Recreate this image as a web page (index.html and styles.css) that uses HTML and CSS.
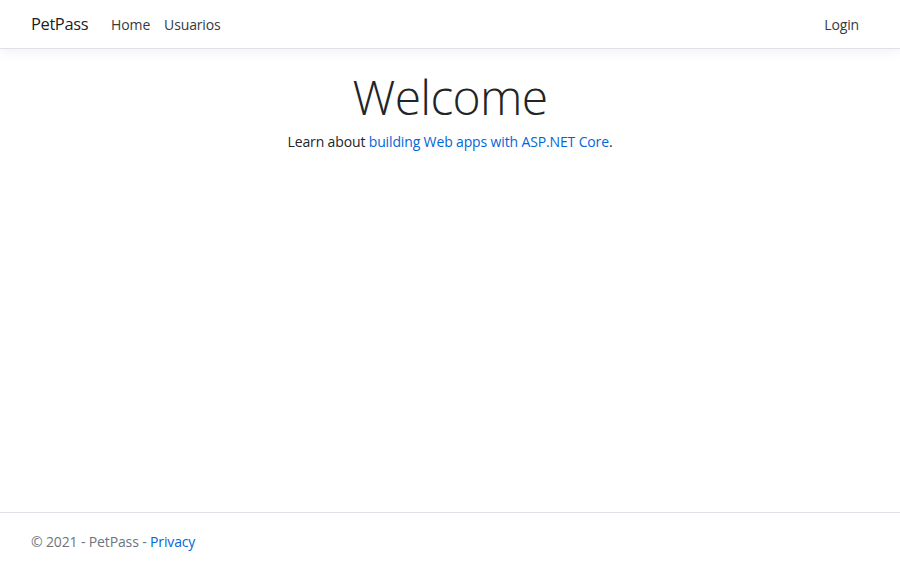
FILE: index.html
```html
<!DOCTYPE html>
<html lang="en">
<head>
<meta charset="utf-8">
<title>Home Page - PetPass</title>
<link rel="stylesheet" href="styles.css">
</head>
<body>
<div class="page">
  <header class="navbar">
    <a class="brand" href="#">PetPass</a>
    <nav class="nav-left">
      <a class="nav-link" href="#">Home</a>
      <a class="nav-link" href="#">Usuarios</a>
    </nav>
    <nav class="nav-right">
      <a class="nav-link" href="#">Login</a>
    </nav>
  </header>
  <main class="main">
    <h1 class="display">Welcome</h1>
    <p class="lead-text">Learn about <a class="link" href="#">building Web apps with ASP.NET Core</a>.</p>
  </main>
  <footer class="footer">
    &copy; 2021 - PetPass - <a class="link" href="#">Privacy</a>
  </footer>
</div>
</body>
</html>
```
FILE: styles.css
```css
html, body {
  margin: 0;
  padding: 0;
}
body {
  font-family: "Open Sans", "Noto Sans", sans-serif;
  font-size: 14px;
  letter-spacing: -0.14px;
  line-height: 1.5;
  color: #212529;
  background: #fff;
}
a { text-decoration: none; }
.page {
  min-height: 100vh;
  display: flex;
  flex-direction: column;
}
.navbar {
  display: flex;
  align-items: center;
  height: 48px;
  padding: 0 31px;
  border-bottom: 1px solid #dee2e6;
  box-shadow: 0 3.5px 10.5px rgba(0,0,0,.05);
}
.brand {
  font-size: 16.5px;
  letter-spacing: -0.4px;
  color: rgba(0,0,0,.9);
  margin-right: 16px;
}
.nav-left, .nav-right {
  display: flex;
}
.nav-left { flex: 1; }
.nav-link {
  color: #343a40;
  padding: 0 7px;
}
.nav-right .nav-link { padding-right: 10px; }
.main {
  flex: 1;
  text-align: center;
  padding-top: 19px;
}
.display {
  font-size: 48px;
  font-weight: 300;
  letter-spacing: -0.7px;
  line-height: 1.2;
  margin: 0 0 5px;
}
.lead-text {
  margin: 0;
}
.link { color: #0366d6; }
.footer {
  border-top: 1px solid #dee2e6;
  height: 48px;
  line-height: 57px;
  padding: 0 31px;
  color: #6c757d;
}
```
